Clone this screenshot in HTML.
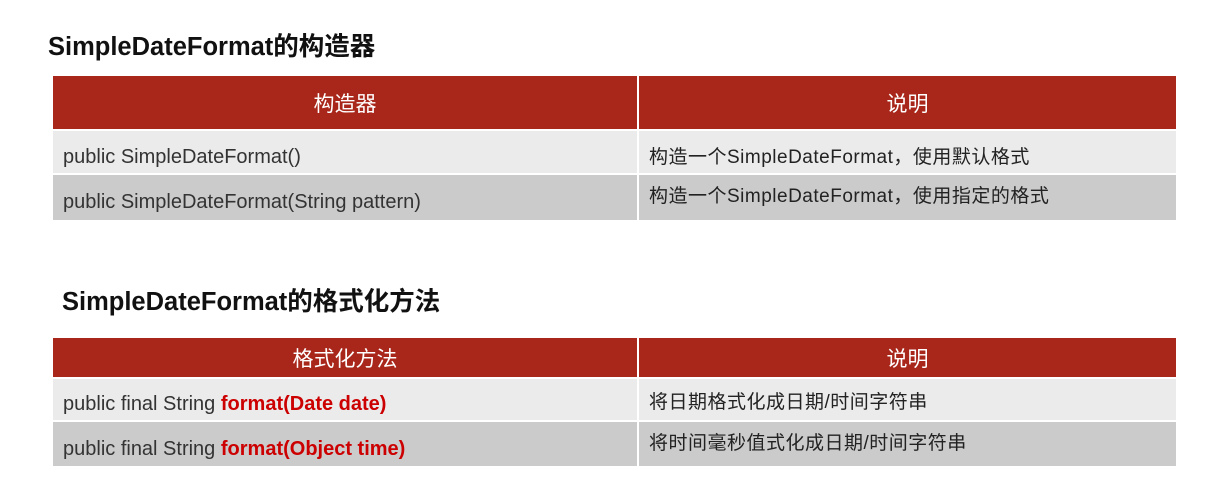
<!DOCTYPE html>
<html><head><meta charset="utf-8"><style>
body{margin:0;width:1208px;height:495px;background:#fff;position:relative;overflow:hidden;font-family:"Liberation Sans","Noto Sans CJK SC",sans-serif;}
.a{position:absolute;}
.t{font-weight:bold;font-size:25.5px;color:#111;line-height:30px;}
.h{background:#a8261a;color:#fff;font-size:21px;display:flex;align-items:center;justify-content:center;}
.r1{background:#ebebeb;}
.r2{background:#cbcbcb;}
.c{font-size:20px;color:#333;padding-left:10px;box-sizing:border-box;line-height:24px;white-space:nowrap;}
.d{font-size:19px;color:#222;padding-left:10px;box-sizing:border-box;line-height:24px;letter-spacing:0.5px;white-space:nowrap;}
b{color:#c00;}
</style></head><body>
<div class="a t" style="left:48px;top:32px;">SimpleDateFormat的构造器</div>
<div class="a h" style="left:53px;top:76px;width:584px;height:53px;">构造器</div>
<div class="a h" style="left:639px;top:76px;width:537px;height:53px;">说明</div>
<div class="a r1 c" style="left:53px;top:131px;width:584px;height:42px;padding-top:14px;">public SimpleDateFormat()</div>
<div class="a r1 d" style="left:639px;top:131px;width:537px;height:42px;padding-top:15px;">构造一个SimpleDateFormat，使用默认格式</div>
<div class="a r2 c" style="left:53px;top:175px;width:584px;height:45px;padding-top:15px;">public SimpleDateFormat(String pattern)</div>
<div class="a r2 d" style="left:639px;top:175px;width:537px;height:45px;padding-top:10px;">构造一个SimpleDateFormat，使用指定的格式</div>

<div class="a t" style="left:62px;top:287px;">SimpleDateFormat的格式化方法</div>
<div class="a h" style="left:53px;top:338px;width:584px;height:39px;">格式化方法</div>
<div class="a h" style="left:639px;top:338px;width:537px;height:39px;">说明</div>
<div class="a r1 c" style="left:53px;top:379px;width:584px;height:41px;padding-top:13px;">public final String <b>format(Date date)</b></div>
<div class="a r1 d" style="left:639px;top:379px;width:537px;height:41px;padding-top:12px;">将日期格式化成日期/时间字符串</div>
<div class="a r2 c" style="left:53px;top:422px;width:584px;height:44px;padding-top:15px;">public final String <b>format(Object time)</b></div>
<div class="a r2 d" style="left:639px;top:422px;width:537px;height:44px;padding-top:10px;">将时间毫秒值式化成日期/时间字符串</div>
</body></html>
